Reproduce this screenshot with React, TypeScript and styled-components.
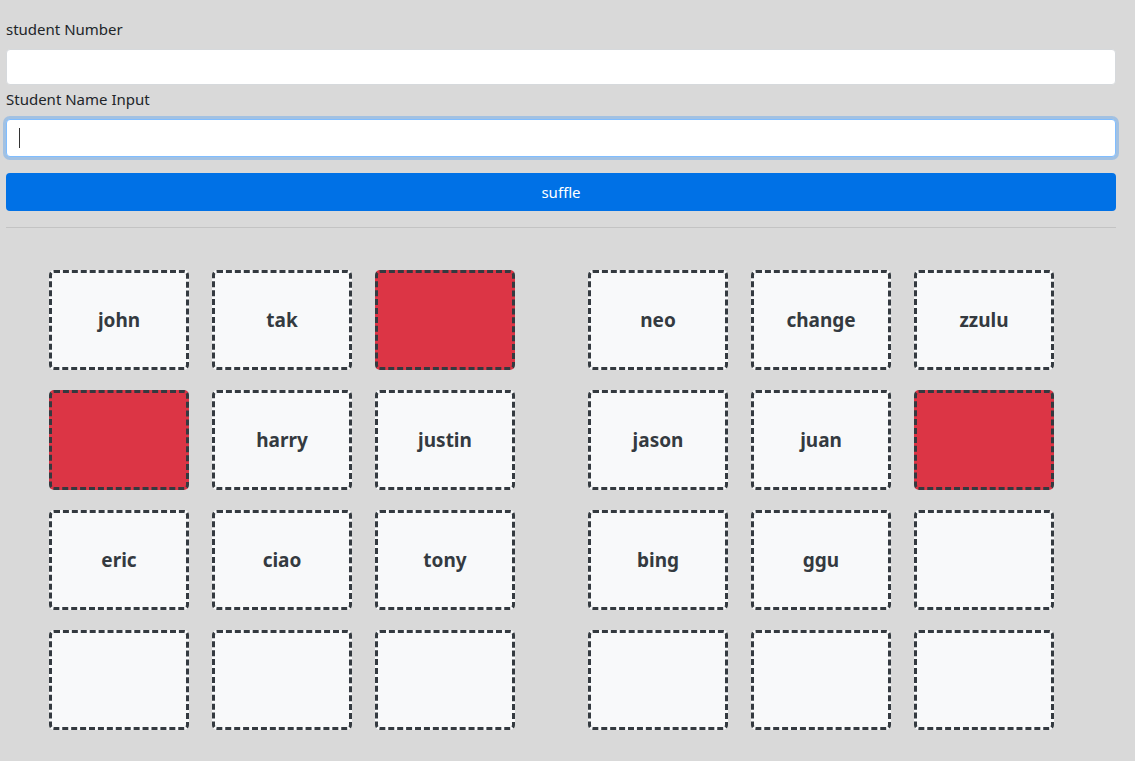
import React from "react";
import styled, { createGlobalStyle } from "styled-components";

const Global = createGlobalStyle`
  html, body { margin: 0; padding: 0; background: #d9d9d9; }
  body { font-family: "Noto Sans", "Open Sans", "DejaVu Sans", sans-serif; color: #212529; }
  * { box-sizing: border-box; }
`;

const Page = styled.div`
  padding: 17px 19px 30px 6px;
  min-height: 761px;
`;

const Label = styled.label`
  display: block;
  font-size: 15px;
  line-height: 24px;
  margin-bottom: 8px;
  color: #212529;
`;

const Input = styled.input<{ $focused?: boolean }>`
  display: block;
  width: 100%;
  height: ${(p) => (p.$focused ? "38px" : "36px")};
  padding: 6px 12px;
  font-size: 16px;
  font-family: inherit;
  background: #fff;
  border: 1px solid ${(p) => (p.$focused ? "#80bdff" : "#d6d9dc")};
  border-radius: 4px;
  outline: none;
  box-shadow: ${(p) => (p.$focused ? "0 0 0 3px rgba(0,123,255,.25)" : "none")};
  margin-bottom: 2px;
`;

const Caret = styled.span`
  position: absolute;
  left: 13px;
  top: 9px;
  width: 1px;
  height: 20px;
  background: #333;
`;

const FieldWrap = styled.div`
  position: relative;
`;

const Button = styled.button`
  display: block;
  width: 100%;
  height: 38px;
  margin-top: 16px;
  background: #0071e6;
  color: #fff;
  border: none;
  border-radius: 4px;
  font-family: inherit;
  font-size: 15px;
`;

const Rule = styled.hr`
  margin: 16px 0 0;
  border: 0;
  border-top: 1px solid #c3c3c3;
`;

const Board = styled.div`
  display: flex;
  gap: 73px;
  padding: 42px 0 0 43px;
`;

const Group = styled.div`
  display: grid;
  grid-template-columns: repeat(3, 140px);
  grid-auto-rows: 100px;
  column-gap: 23px;
  row-gap: 20px;
`;

const Seat = styled.div<{ $blocked?: boolean }>`
  display: flex;
  align-items: center;
  justify-content: center;
  border: 3px dashed #343a40;
  border-radius: 5px;
  background: ${(p) => (p.$blocked ? "#dc3545" : "#f8f9fa")};
  font-size: 19px;
  font-weight: 700;
  color: #343a40;
`;

type S = string | null | "";
const left: S[] = ["john", "tak", null, null, "harry", "justin", "eric", "ciao", "tony", "", "", ""];
const right: S[] = ["neo", "change", "zzulu", "jason", "juan", null, "bing", "ggu", "", "", "", ""];

export default function App() {
  return (
    <>
      <Global />
      <Page>
        <Label>student Number</Label>
        <Input />
        <Label>Student Name Input</Label>
        <FieldWrap>
          <Input $focused />
          <Caret />
        </FieldWrap>
        <Button>suffle</Button>
        <Rule />
        <Board>
          <Group>
            {left.map((n, i) => (
              <Seat key={i} $blocked={n === null}>{n}</Seat>
            ))}
          </Group>
          <Group>
            {right.map((n, i) => (
              <Seat key={i} $blocked={n === null}>{n}</Seat>
            ))}
          </Group>
        </Board>
      </Page>
    </>
  );
}
